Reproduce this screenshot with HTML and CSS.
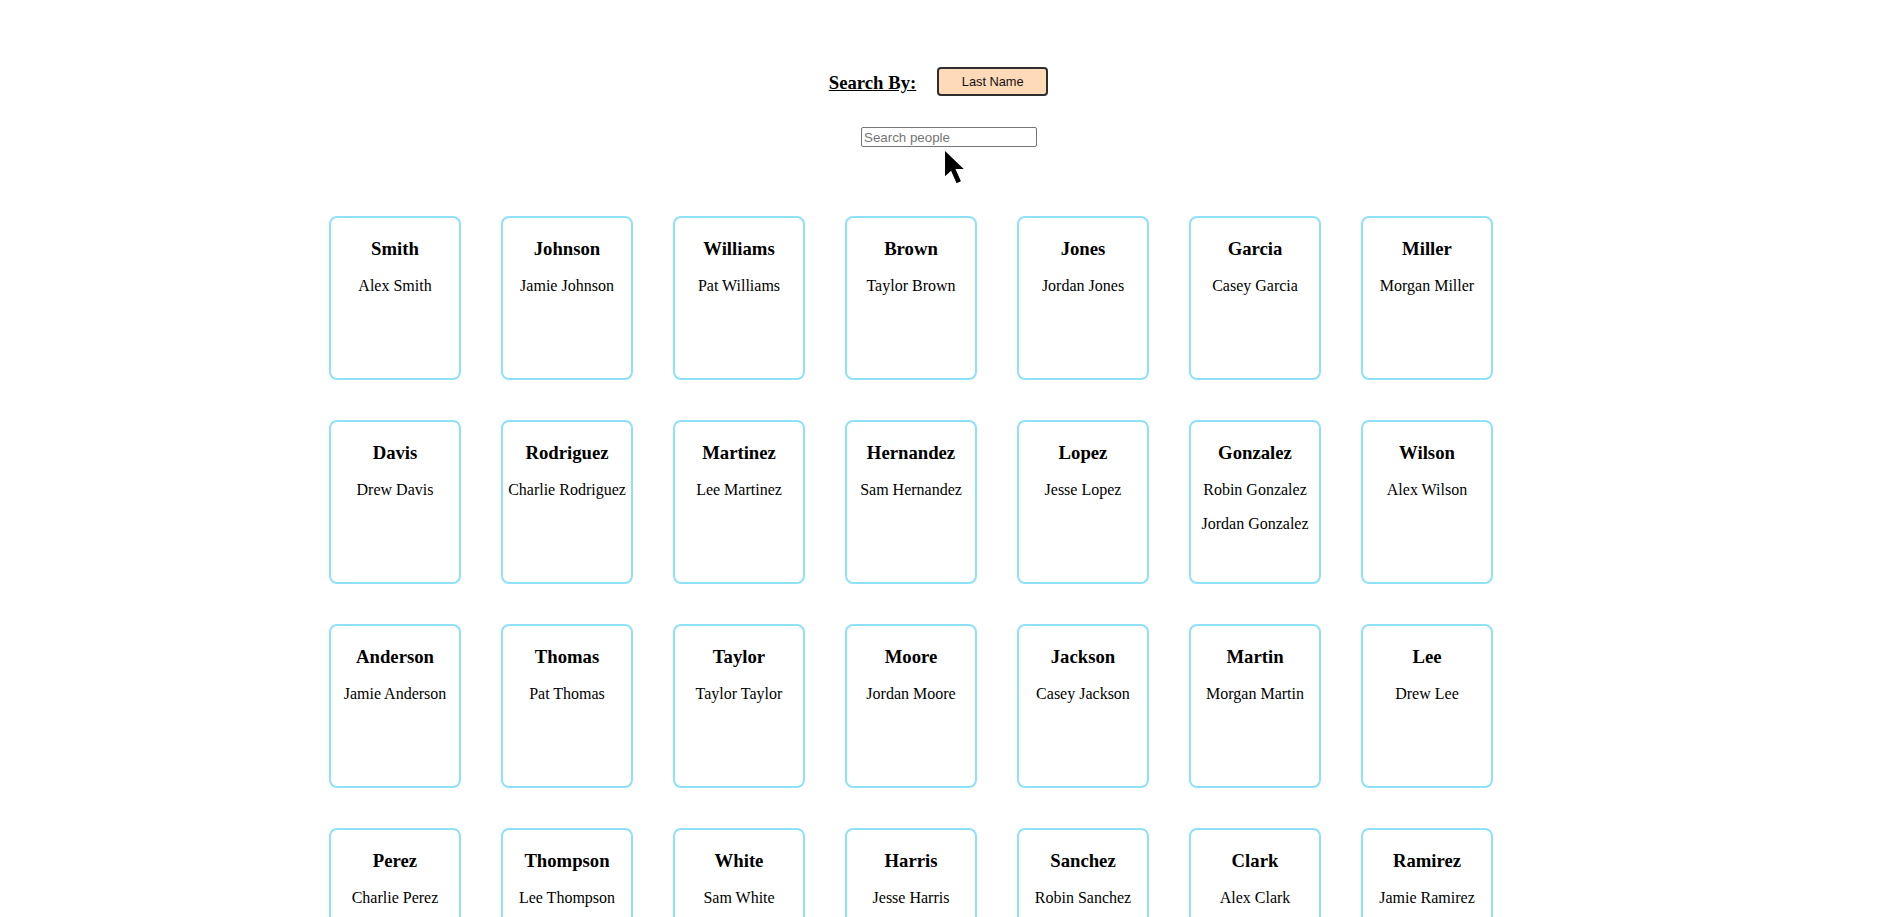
FILE: index.html
```html
<!DOCTYPE html>
<html lang="en">
<head>
<meta charset="utf-8">
<title>People</title>
<link rel="stylesheet" href="styles.css">
</head>
<body>
<div class="controls">
  <span class="search-label">Search By:</span>
  <button class="mode-btn" type="button">Last Name</button>
</div>
<div class="search-row">
  <input class="search-input" type="text" placeholder="Search people">
</div>
<div class="cards">
  <div class="card"><h3>Smith</h3><p>Alex Smith</p></div>
  <div class="card"><h3>Johnson</h3><p>Jamie Johnson</p></div>
  <div class="card"><h3>Williams</h3><p>Pat Williams</p></div>
  <div class="card"><h3>Brown</h3><p>Taylor Brown</p></div>
  <div class="card"><h3>Jones</h3><p>Jordan Jones</p></div>
  <div class="card"><h3>Garcia</h3><p>Casey Garcia</p></div>
  <div class="card"><h3>Miller</h3><p>Morgan Miller</p></div>
  <div class="card"><h3>Davis</h3><p>Drew Davis</p></div>
  <div class="card"><h3>Rodriguez</h3><p>Charlie Rodriguez</p></div>
  <div class="card"><h3>Martinez</h3><p>Lee Martinez</p></div>
  <div class="card"><h3>Hernandez</h3><p>Sam Hernandez</p></div>
  <div class="card"><h3>Lopez</h3><p>Jesse Lopez</p></div>
  <div class="card"><h3>Gonzalez</h3><p>Robin Gonzalez</p><p>Jordan Gonzalez</p></div>
  <div class="card"><h3>Wilson</h3><p>Alex Wilson</p></div>
  <div class="card"><h3>Anderson</h3><p>Jamie Anderson</p></div>
  <div class="card"><h3>Thomas</h3><p>Pat Thomas</p></div>
  <div class="card"><h3>Taylor</h3><p>Taylor Taylor</p></div>
  <div class="card"><h3>Moore</h3><p>Jordan Moore</p></div>
  <div class="card"><h3>Jackson</h3><p>Casey Jackson</p></div>
  <div class="card"><h3>Martin</h3><p>Morgan Martin</p></div>
  <div class="card"><h3>Lee</h3><p>Drew Lee</p></div>
  <div class="card"><h3>Perez</h3><p>Charlie Perez</p></div>
  <div class="card"><h3>Thompson</h3><p>Lee Thompson</p></div>
  <div class="card"><h3>White</h3><p>Sam White</p></div>
  <div class="card"><h3>Harris</h3><p>Jesse Harris</p></div>
  <div class="card"><h3>Sanchez</h3><p>Robin Sanchez</p></div>
  <div class="card"><h3>Clark</h3><p>Alex Clark</p></div>
  <div class="card"><h3>Ramirez</h3><p>Jamie Ramirez</p></div>
</div>
<svg class="cursor" width="22" height="34" viewBox="0 0 20 31" aria-hidden="true">
  <polygon points="0,0 0,23 5.5,18 10.5,29.5 14.5,27.5 9.5,16.5 17,16.5" fill="#000"/>
</svg>
</body>
</html>
```
FILE: styles.css
```css
html, body {
  margin: 0;
  padding: 0;
  background: #ffffff;
  overflow: hidden;
}
body {
  font-family: "Liberation Serif", "Times New Roman", serif;
  color: #000;
  position: relative;
  min-height: 917px;
}
.controls {
  display: flex;
  justify-content: center;
  align-items: center;
  padding-top: 67px;
}
.search-label {
  font-size: 18.72px;
  font-weight: bold;
  text-decoration: underline;
  margin-right: 21px;
  position: relative;
  top: 1px;
}
.mode-btn {
  font-family: "Liberation Sans", Arial, sans-serif;
  font-size: 12.8px;
  color: #111;
  background: #ffdab9;
  border: 2px solid #2e2e2e;
  border-radius: 4px;
  height: 29px;
  width: 111px;
  padding: 0;
  margin-right: 21px;
}
.search-row {
  display: flex;
  justify-content: center;
  margin-top: 31px;
}
.search-input {
  box-sizing: border-box;
  width: 176px;
  height: 20px;
  border: 1px solid #767676;
  border-radius: 2px;
  padding: 1px 2px;
  font-family: "Liberation Sans", Arial, sans-serif;
  font-size: 13.33px;
}
.search-input::placeholder {
  color: #757575;
}
.cards {
  max-width: 1280px;
  margin: 49px auto 0;
  display: flex;
  flex-wrap: wrap;
}
.card {
  box-sizing: border-box;
  width: 132px;
  height: 164px;
  margin: 20px;
  border: 2px solid #8fe1f7;
  border-radius: 8px;
  text-align: center;
  overflow: hidden;
}
.card h3 {
  font-size: 18.72px;
  margin: 19.7px 0 17.7px;
}
.card p {
  font-size: 16px;
  margin: 16px 0;
}
.cursor {
  position: absolute;
  left: 945px;
  top: 151px;
}
```
